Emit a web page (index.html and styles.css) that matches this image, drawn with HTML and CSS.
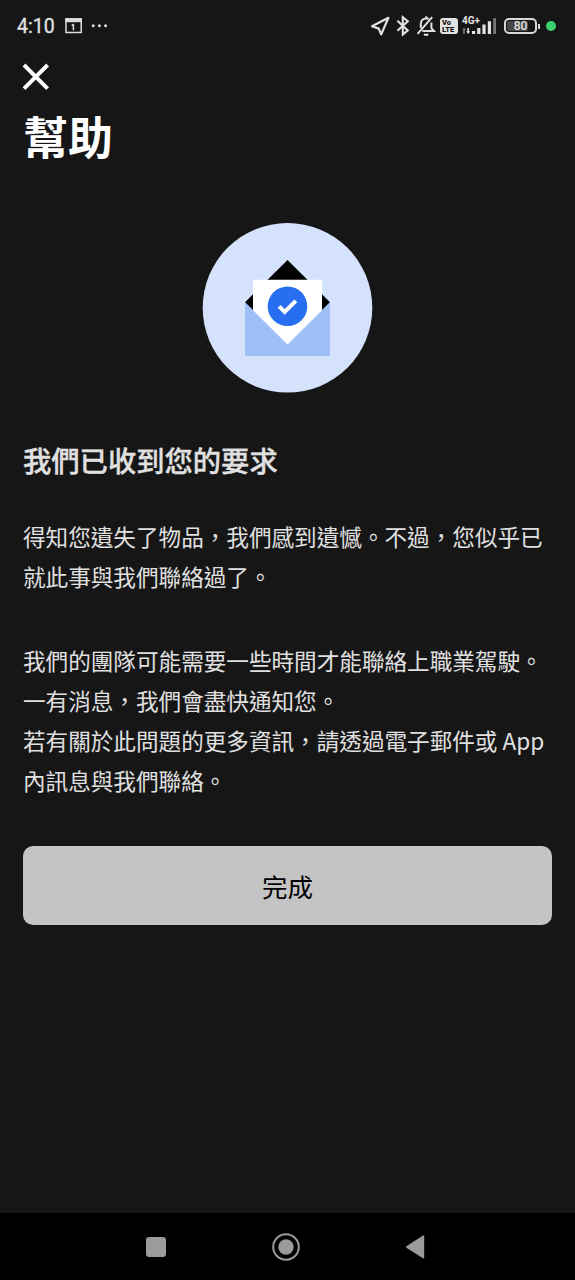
FILE: index.html
```html
<!DOCTYPE html>
<html lang="zh-Hant">
<head>
<meta charset="utf-8">
<title>幫助</title>
<link rel="stylesheet" href="styles.css">
</head>
<body>
<div class="screen">
  <header class="status">
    <span class="time">4:10</span>
    <svg class="calendar" width="18" height="18" viewBox="65 17 18 18"><path fill="none" stroke="#dedede" stroke-width="1.5" d="M66 19h15.2v13.6H66z"/><path fill="#dedede" d="M65.3 18.2h16.6v4H65.3z"/><path fill="none" stroke="#dedede" stroke-width="1.5" d="M71.6 25.4l1.8-.7v5.6"/></svg>
    <svg class="dots" width="17" height="6" viewBox="91 22.5 17 6" fill="#dedede"><circle cx="93.2" cy="25.2" r="1.5"/><circle cx="99.4" cy="25.2" r="1.5"/><circle cx="105.6" cy="25.2" r="1.5"/></svg>
    <div class="indicators">
      <svg width="20" height="22" viewBox="370 15 20 22"><path fill="none" stroke="#e2e2e2" stroke-width="2.2" stroke-linejoin="round" d="M372 26.2L388.4 17.8 381.2 34.4 378.8 28.6Z"/></svg>
      <svg width="14" height="22" viewBox="396 15 14 22"><path fill="none" stroke="#e2e2e2" stroke-width="2.1" d="M397.4 20.8l10.4 9.6-5 4.2V17.2l5 4-10.4 9.6"/></svg>
      <svg width="20" height="22" viewBox="416 15 20 22"><g fill="none" stroke="#e2e2e2" stroke-width="2"><path d="M417.6 33.8L432.2 17.2M420.8 28V24c0-3.3 2.2-5.3 5-5.6 1.2-.1 2.2.1 3 .6M431.4 22.6V28.2l2.6 2.8H422.4"/><path d="M426.2 16.2v2.4M424 34.2q2.1 1.4 4.2 0"/></g></svg>
      <span class="volte"><span>Vo</span><span>LTE</span></span>
      <div class="signal">
        <span class="network">4G+</span>
        <svg width="36" height="22" viewBox="461 15 36 22"><path fill="#777" d="M462 30l2-2.5 2 2.5h-1.2v4h-1.6v-4z"/><path fill="#e2e2e2" d="M466.2 31.3h1.2V28h1.6v3.3h1.2l-2 2.7zM472 31h3.2v3H472zM477.2 28h3.2v6h-3.2zM482.4 24.6h3.2V34h-3.2zM487.8 21.3h3.2V34h-3.2z"/><path fill="#777" d="M493.2 18.2h2.8V34h-2.8z"/></svg>
      </div>
      <div class="battery"><span class="level">80</span></div>
      <span class="active-dot"></span>
    </div>
  </header>
  <main class="content">
    <svg class="close" width="28" height="28" viewBox="0 0 28 28"><path stroke="#fff" stroke-width="3.9" d="M2 2l23.6 23.6M25.6 2L2 25.6"/></svg>
    <h1 class="title">幫助</h1>
    <svg class="hero" width="170" height="170" viewBox="203 222.8 170 170">
      <circle cx="287.5" cy="307.6" r="84.8" fill="#d4e2fc"/>
      <path d="M287.5 259.7L330 302l-20 20h-45l-20-20z"/>
      <path fill="#fff" d="M253 279.6h69V330l-34.5 20L253 330z"/>
      <path fill="#a0bff8" d="M245 302l42.5 42.4L330 302v53.8h-85z"/>
      <circle cx="287.5" cy="306.1" r="19.8" fill="#276ef1"/>
      <path fill="none" stroke="#fff" stroke-width="4" d="M279.1 306.2l5.6 5.5 11.1-11.1"/>
    </svg>
    <h2 class="heading">我們已收到您的要求</h2>
    <p class="copy">得知您遺失了物品，我們感到遺憾。不過，您似乎已<br>就此事與我們聯絡過了。</p>
    <p class="copy">我們的團隊可能需要一些時間才能聯絡上職業駕駛。<br>一有消息，我們會盡快通知您。<br>若有關於此問題的更多資訊，請透過電子郵件或 App<br>內訊息與我們聯絡。</p>
    <button class="done">完成</button>
  </main>
  <nav class="navbar">
    <svg width="20" height="20" viewBox="0 0 20 20"><rect width="20" height="20" rx="3.2" fill="#9b9b9b"/></svg>
    <svg width="28" height="28" viewBox="0 0 28 28"><circle cx="14" cy="14" r="12.8" fill="none" stroke="#9b9b9b" stroke-width="2"/><circle cx="14" cy="14" r="7.7" fill="#9b9b9b"/></svg>
    <svg width="20" height="24" viewBox="0 0 20 24"><path fill="#9b9b9b" stroke="#9b9b9b" stroke-width="1.6" stroke-linejoin="round" d="M1.8 12L18.4 1.2v21.4z"/></svg>
  </nav>
</div>
</body>
</html>
```
FILE: styles.css
```css
* { box-sizing: border-box; }
body {
  margin: 0;
  background: #161616;
  font-family: "Noto Sans CJK TC", sans-serif;
}
.screen {
  width: 575px;
  height: 1280px;
  display: flex;
  flex-direction: column;
}
.status {
  height: 52px;
  padding: 0 19px 0 17px;
  display: flex;
  align-items: center;
  color: #e2e2e2;
  font-family: Roboto, sans-serif;
}
.time {
  font-size: 19.5px;
  width: 48px;
  line-height: 24px;
  padding-top: 2px;
  -webkit-text-stroke: 0.3px #e2e2e2;
}
.dots { margin-left: 8px; }
.indicators { margin-left: auto; display: flex; align-items: center; }
.indicators > svg { margin-right: 6px; }
.indicators > svg:nth-child(3) { margin-right: 4px; }
.volte {
  width: 18px;
  height: 16px;
  border-radius: 3px;
  background: #e2e2e2;
  color: #161616;
  display: flex;
  flex-direction: column;
  justify-content: center;
  padding-left: 2px;
  font: 900 7.5px/7px Roboto, sans-serif;
}
.signal { display: grid; margin: 0 7px 0 3px; }
.signal > * { grid-area: 1 / 1; }
.network { font-size: 10px; font-weight: 700; line-height: 10px; padding: 1px 0 0 1px; }
.battery {
  width: 33px;
  height: 16px;
  border: 2px solid #d8d8d8;
  border-radius: 5px;
  padding: 1px;
  position: relative;
  margin-right: 9px;
}
.battery::before {
  content: "";
  display: block;
  width: 21px;
  height: 10px;
  border-radius: 2px;
  background: #484848;
}
.battery::after {
  content: "";
  position: absolute;
  right: -4.5px;
  top: 3.5px;
  width: 2px;
  height: 5px;
  background: #d8d8d8;
}
.level {
  position: absolute;
  inset: 0;
  text-align: center;
  font-size: 12px;
  font-weight: 500;
  line-height: 13px;
}
.active-dot { width: 10px; height: 10px; border-radius: 50%; background: #3bd16f; }
.content {
  flex: 1;
  padding: 11px 23px 0;
  display: flex;
  flex-direction: column;
}
.close { margin-left: -1.5px; }
.title { margin: 12px 0 0; font-size: 45px; font-weight: 700; line-height: 66px; color: #fff; }
.hero { align-self: center; margin-top: 54px; overflow: visible; }
.heading {
  margin: 47px 0 0;
  font-size: 28.3px;
  font-weight: 500;
  line-height: 40px;
  color: #e0e0e0;
  -webkit-text-stroke: 0.35px #e0e0e0;
}
.copy {
  margin: 36.5px 0 0;
  font-size: 22.6px;
  line-height: 40.1px;
  color: #e0e0e0;
  white-space: nowrap;
}
.copy + .copy { margin-top: 44px; }
.done {
  margin: 45px 0 0;
  height: 79px;
  border: 0;
  border-radius: 10px;
  background: #c4c4c4;
  color: #000;
  font: 400 25.5px/40px "Noto Sans CJK TC", sans-serif;
}
.navbar {
  height: 67px;
  background: #000;
  display: flex;
  align-items: center;
  justify-content: space-between;
  padding: 0 150px 0 146px;
}
```
